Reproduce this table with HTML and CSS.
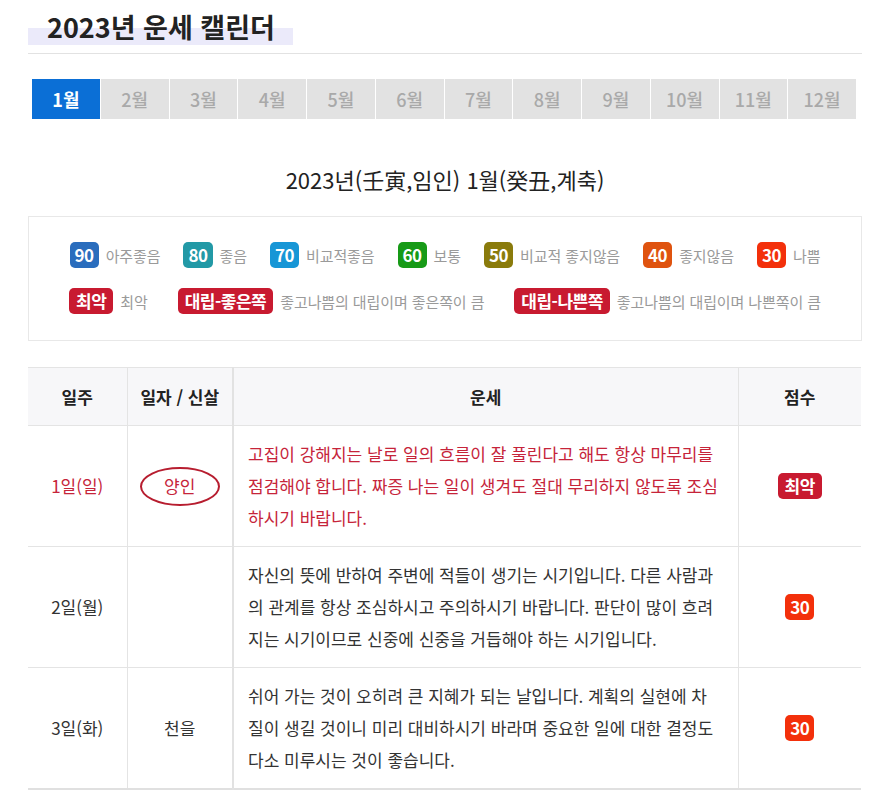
FILE: index.html
```html
<!DOCTYPE html>
<html lang="ko">
<head>
    <meta charset="UTF-8">
    <meta name="viewport" content="width=device-width, initial-scale=1.0">
    <title>2023년 운세 캘린더</title>
    <link rel="stylesheet" href="styles.css">
</head>
<body>
    <div class="container">
        <div class="page-head">
            <h1>2023년 운세 캘린더</h1>
        </div>

        <ul class="months">
            <li class="active">1월</li>
            <li>2월</li>
            <li>3월</li>
            <li>4월</li>
            <li>5월</li>
            <li>6월</li>
            <li>7월</li>
            <li>8월</li>
            <li>9월</li>
            <li>10월</li>
            <li>11월</li>
            <li>12월</li>
        </ul>

        <h2 class="subtitle">2023년(壬寅,임인) 1월(癸丑,계축)</h2>

        <div class="legend">
            <div class="legend-row">
                <span class="item"><b class="badge s90">90</b>아주좋음</span>
                <span class="item"><b class="badge s80">80</b>좋음</span>
                <span class="item"><b class="badge s70">70</b>비교적좋음</span>
                <span class="item"><b class="badge s60">60</b>보통</span>
                <span class="item"><b class="badge s50">50</b>비교적 좋지않음</span>
                <span class="item"><b class="badge s40">40</b>좋지않음</span>
                <span class="item"><b class="badge s30">30</b>나쁨</span>
            </div>
            <div class="legend-row wide">
                <span class="item"><b class="badge worst">최악</b>최악</span>
                <span class="item"><b class="badge worst">대립-좋은쪽</b>좋고나쁨의 대립이며 좋은쪽이 큼</span>
                <span class="item"><b class="badge worst">대립-나쁜쪽</b>좋고나쁨의 대립이며 나쁜쪽이 큼</span>
            </div>
        </div>

        <table class="fortune">
            <colgroup>
                <col class="c-day">
                <col class="c-sin">
                <col class="c-text">
                <col class="c-score">
            </colgroup>
            <thead>
                <tr>
                    <th>일주</th>
                    <th>일자 / 신살</th>
                    <th>운세</th>
                    <th>점수</th>
                </tr>
            </thead>
            <tbody>
                <tr class="bad">
                    <td>1일(일)</td>
                    <td><span class="circle">양인</span></td>
                    <td class="text">고집이 강해지는 날로 일의 흐름이 잘 풀린다고 해도 항상 마무리를 점검해야 합니다. 짜증 나는 일이 생겨도 절대 무리하지 않도록 조심하시기 바랍니다.</td>
                    <td><b class="badge worst">최악</b></td>
                </tr>
                <tr>
                    <td>2일(월)</td>
                    <td></td>
                    <td class="text">자신의 뜻에 반하여 주변에 적들이 생기는 시기입니다. 다른 사람과의 관계를 항상 조심하시고 주의하시기 바랍니다. 판단이 많이 흐려지는 시기이므로 신중에 신중을 거듭해야 하는 시기입니다.</td>
                    <td><b class="badge s30">30</b></td>
                </tr>
                <tr>
                    <td>3일(화)</td>
                    <td>천을</td>
                    <td class="text">쉬어 가는 것이 오히려 큰 지혜가 되는 날입니다. 계획의 실현에 차질이 생길 것이니 미리 대비하시기 바라며 중요한 일에 대한 결정도 다소 미루시는 것이 좋습니다.</td>
                    <td><b class="badge s30">30</b></td>
                </tr>
            </tbody>
        </table>
    </div>
</body>
</html>
```

FILE: styles.css
```css
body {
    font-family: "Noto Sans CJK KR", "Noto Sans", sans-serif;
    color: #333;
    background-color: #fff;
    margin: 0;
    padding: 0;
}
.container {
    width: 834px;
    margin-left: 28px;
    padding-top: 9px;
}

/* 제목 */
.page-head {
    border-bottom: 1px solid #e2e2e2;
    padding-bottom: 8px;
}
.page-head h1 {
    display: inline-block;
    margin: 0;
    padding: 0 18px 0 19px;
    font-size: 27px;
    line-height: 36px;
    font-weight: 700;
    color: #222;
    background: linear-gradient(transparent 53%, #ebeafa 53%);
}

/* 월 탭 */
.months {
    display: flex;
    gap: 1px;
    list-style: none;
    margin: 25px 6px 0 4px;
    padding: 0;
}
.months li {
    flex: 1;
    height: 40px;
    line-height: 40px;
    text-align: center;
    font-size: 18px;
    font-weight: 500;
    color: #a9a9a9;
    background-color: #e2e2e2;
}
.months li.active {
    background-color: #0b6fd6;
    color: #fff;
    font-weight: 700;
}

.subtitle {
    margin: 46px 0 0;
    text-align: center;
    font-size: 22px;
    line-height: 28px;
    font-weight: 400;
    color: #222;
}

/* 범례 */
.legend {
    margin-top: 23px;
    border: 1px solid #e8e8e8;
    padding: 25px 0 26px;
}
.legend-row {
    display: flex;
    justify-content: center;
    gap: 23px;
}
.legend-row.wide {
    gap: 30px;
    margin-top: 20px;
}
.legend .item {
    display: flex;
    align-items: center;
    gap: 7px;
    font-size: 15px;
    letter-spacing: -0.1px;
    color: #9a9a9a;
}

.badge {
    display: inline-block;
    height: 26px;
    line-height: 26px;
    padding: 0 5px;
    border-radius: 5px;
    font-size: 17px;
    font-weight: 700;
    color: #fff;
    letter-spacing: -0.5px;
}
.s90 { background-color: #2a6dbd; }
.s80 { background-color: #2299a6; }
.s70 { background-color: #1796d6; }
.s60 { background-color: #179a17; }
.s50 { background-color: #8a7b0c; }
.s40 { background-color: #df530f; }
.s30 { background-color: #f3300b; }
.worst { background-color: #c81a30; padding: 0 7px; }

/* 운세 표 */
.fortune {
    width: 833px;
    margin-top: 26px;
    border-collapse: collapse;
    table-layout: fixed;
    border-bottom: 2px solid #e0e0e0;
}
.c-day { width: 99px; }
.c-sin { width: 106px; }
.c-text { width: 505px; }
.c-score { width: 123px; }
.fortune th {
    height: 55px;
    background-color: #f7f7f9;
    border-top: 1px solid #e4e4e4;
    border-bottom: 1px solid #e4e4e4;
    border-left: 1px solid #e4e4e4;
    font-size: 17px;
    font-weight: 700;
    color: #222;
    text-align: center;
}
.fortune td {
    height: 96px;
    padding: 12px 0;
    border-bottom: 1px solid #e4e4e4;
    border-left: 1px solid #e4e4e4;
    text-align: center;
    font-size: 17px;
    line-height: 32px;
    color: #333;
}
.fortune th:first-child,
.fortune td:first-child {
    border-left: none;
}
.fortune th:nth-child(3),
.fortune td:nth-child(3) {
    border-left: 2px solid #e2e2e2;
}
.fortune td.text {
    text-align: left;
    padding: 12px 17px 12px 14px;
}
.fortune tr.bad td {
    color: #c6243a;
}
.circle {
    display: inline-block;
    width: 76px;
    height: 35px;
    line-height: 33px;
    border: 2px solid #b71d2f;
    border-radius: 50%;
}
```
